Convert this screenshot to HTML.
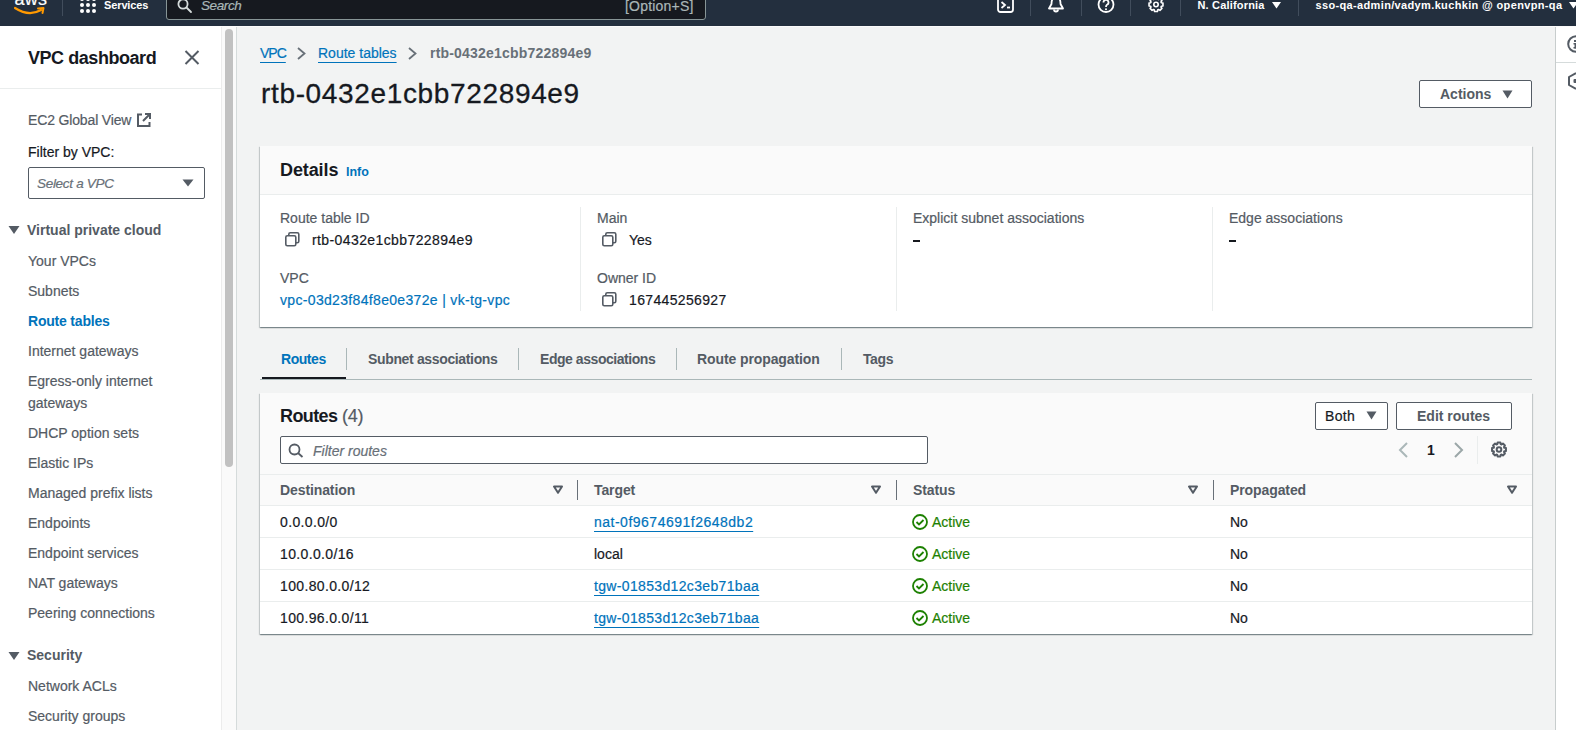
<!DOCTYPE html>
<html><head><meta charset="utf-8"><style>
html,body{margin:0;padding:0;width:1576px;height:730px;overflow:hidden;}
body{font-family:"Liberation Sans",sans-serif;position:relative;background:#f2f3f3;}
.t{position:absolute;white-space:nowrap;-webkit-text-stroke:0.2px currentColor;}
.r{position:absolute;}
u{text-decoration:underline;text-underline-offset:4px;text-decoration-thickness:1.2px;}
</style></head><body>
<div class="r" style="left:0px;top:0px;width:1576px;height:730px;background:#f2f3f3"></div>
<div class="r" style="left:0px;top:0px;width:1576px;height:26px;background:#232f3e"></div>
<div class="r" style="left:0px;top:26px;width:1576px;height:1px;background:#fbfbfb"></div>
<div class="r" style="left:0px;top:26px;width:221px;height:704px;background:#fff"></div>
<div class="r" style="left:221px;top:27px;width:15px;height:703px;background:#fafafa;border-left:1px solid #ececec;box-sizing:border-box"></div>
<div class="r" style="left:225px;top:29px;width:8px;height:438px;background:#c1c1c1;border-radius:4px"></div>
<div class="r" style="left:236px;top:27px;width:1px;height:703px;background:#d5dbdb"></div>
<div class="r" style="left:1555px;top:27px;width:21px;height:703px;background:#fff"></div>
<div class="r" style="left:1555px;top:27px;width:1px;height:703px;background:#c8cdcd"></div>
<svg class="r" style="left:1567px;top:35px" width="12" height="18" viewBox="0 0 12 18"><path d="M9 1.2 A7.8 7.8 0 0 0 9 16.8" stroke="#545b64" stroke-width="2" fill="none"/><rect x="7" y="5" width="3" height="2" fill="#545b64"/><rect x="7.5" y="8" width="2" height="5.5" fill="#545b64"/><rect x="6.5" y="8" width="3" height="1.5" fill="#545b64"/><rect x="6.5" y="12" width="3" height="1.5" fill="#545b64"/></svg>
<svg class="r" style="left:1567px;top:72px" width="12" height="18" viewBox="0 0 12 18"><path d="M9 1 L2 5 V13 L9 17" stroke="#545b64" stroke-width="2" fill="none" stroke-linejoin="round"/><rect x="6.5" y="7" width="3" height="4" rx="1" fill="#545b64"/></svg>
<div class="r" style="left:1556px;top:62px;width:20px;height:1px;background:#d5dbdb"></div>
<div class="t" style="left:14.5px;top:-10.24px;font-size:18px;line-height:18px;color:#fff;letter-spacing:0.3px;">aws</div>
<svg class="r" style="left:14px;top:6px" width="32" height="10" viewBox="0 0 32 10"><path d="M1 2 Q15 11 27 4" stroke="#f90" stroke-width="2.2" fill="none" stroke-linecap="round"/><path d="M24 2.5 L29.5 2 L28.5 7" stroke="#f90" stroke-width="2" fill="none" stroke-linecap="round" stroke-linejoin="round"/></svg>
<div class="r" style="left:62px;top:0px;width:1px;height:16px;background:#414d5c"></div>
<svg class="r" style="left:80px;top:0px" width="16" height="14" viewBox="0 0 16 14"><g fill="#fff"><circle cx="2" cy="-1" r="2"/><circle cx="2" cy="5" r="2"/><circle cx="2" cy="11" r="2"/><circle cx="8" cy="-1" r="2"/><circle cx="8" cy="5" r="2"/><circle cx="8" cy="11" r="2"/><circle cx="14" cy="-1" r="2"/><circle cx="14" cy="5" r="2"/><circle cx="14" cy="11" r="2"/></g></svg>
<div class="t" style="left:104px;top:-0.36px;font-size:11px;line-height:11px;color:#fff;font-weight:700;-webkit-text-stroke:0;letter-spacing:-0.12px;">Services</div>
<div class="r" style="left:166px;top:-4px;width:540px;height:24px;background:#16191f;border:1px solid #879596;border-radius:3px;box-sizing:border-box"></div>
<svg class="r" style="left:177px;top:0px" width="16" height="14" viewBox="0 0 16 14"><circle cx="6" cy="4" r="4.6" stroke="#d5dbdb" stroke-width="1.8" fill="none"/><path d="M9.5 7.5 L14 12" stroke="#d5dbdb" stroke-width="1.8" stroke-linecap="round"/></svg>
<div class="t" style="left:201px;top:-0.93px;font-size:13.5px;line-height:13.5px;color:#aab7b8;font-style:italic;letter-spacing:-0.4px;">Search</div>
<div class="t" style="left:625px;top:-1.35px;font-size:14px;line-height:14px;color:#aab7b8;letter-spacing:0.2px;">[Option+S]</div>
<svg class="r" style="left:997px;top:-4px" width="18" height="17" viewBox="0 0 18 17"><rect x="1" y="1" width="15" height="15" rx="2.5" stroke="#fff" stroke-width="1.8" fill="none"/><path d="M4.5 6 L8 9 L4.5 12" stroke="#fff" stroke-width="1.8" fill="none"/><path d="M10 11.5 H13" stroke="#fff" stroke-width="1.8"/></svg>
<div class="r" style="left:1030px;top:0px;width:1px;height:16px;background:#414d5c"></div>
<svg class="r" style="left:1047px;top:-4px" width="18" height="17" viewBox="0 0 18 17"><path d="M9 1 C5 1 4.5 5 4.5 8 L2 12.5 H16 L13.5 8 C13.5 5 13 1 9 1 Z" stroke="#fff" stroke-width="1.8" fill="none" stroke-linejoin="round"/><path d="M7 13.5 a2 2 0 0 0 4 0" stroke="#fff" stroke-width="1.8" fill="none"/></svg>
<div class="r" style="left:1081px;top:0px;width:1px;height:16px;background:#414d5c"></div>
<svg class="r" style="left:1097px;top:-4px" width="18" height="17" viewBox="0 0 18 17"><circle cx="9" cy="8.5" r="7.5" stroke="#fff" stroke-width="1.8" fill="none"/><path d="M6.5 6.5 a2.5 2.5 0 1 1 3.5 2.2 C9 9.3 9 10 9 11" stroke="#fff" stroke-width="1.8" fill="none"/><circle cx="9" cy="13.2" r="1" fill="#fff"/></svg>
<div class="r" style="left:1130px;top:0px;width:1px;height:16px;background:#414d5c"></div>
<svg class="r" style="left:1147px;top:-4px" width="18" height="17" viewBox="0 0 18 17"><path d="M7.24 3.18 L7.59 1.54 L10.41 1.54 L10.76 3.18 L11.51 3.50 L12.92 2.58 L14.92 4.58 L14.00 5.99 L14.32 6.74 L15.96 7.09 L15.96 9.91 L14.32 10.26 L14.00 11.01 L14.92 12.42 L12.92 14.42 L11.51 13.50 L10.76 13.82 L10.41 15.46 L7.59 15.46 L7.24 13.82 L6.49 13.50 L5.08 14.42 L3.08 12.42 L4.00 11.01 L3.68 10.26 L2.04 9.91 L2.04 7.09 L3.68 6.74 L4.00 5.99 L3.08 4.58 L5.08 2.58 L6.49 3.50 Z" stroke="#fff" stroke-width="1.6" fill="none" stroke-linejoin="round"/><circle cx="9" cy="8.5" r="2.2" stroke="#fff" stroke-width="1.6" fill="none"/></svg>
<div class="r" style="left:1180px;top:0px;width:1px;height:16px;background:#414d5c"></div>
<div class="t" style="left:1197.5px;top:-0.41px;font-size:11px;line-height:11px;color:#fff;font-weight:700;-webkit-text-stroke:0;letter-spacing:0.18px;">N. California</div>
<svg class="r" style="left:1272px;top:2px" width="9" height="7" viewBox="0 0 9 7"><path d="M0 0 H9 L4.5 6.5 Z" fill="#fff"/></svg>
<div class="r" style="left:1298px;top:0px;width:1px;height:16px;background:#414d5c"></div>
<div class="t" style="left:1315.5px;top:-0.41px;font-size:11px;line-height:11px;color:#fff;font-weight:700;-webkit-text-stroke:0;letter-spacing:0.35px;">sso-qa-admin/vadym.kuchkin @ openvpn-qa</div>
<svg class="r" style="left:1569px;top:2px" width="9" height="7" viewBox="0 0 9 7"><path d="M0 0 H9 L4.5 6.5 Z" fill="#fff"/></svg>
<div class="t" style="left:28px;top:48.56px;font-size:18px;line-height:18px;color:#16191f;font-weight:700;-webkit-text-stroke:0;letter-spacing:-0.45px;">VPC dashboard</div>
<svg class="r" style="left:184px;top:50px" width="16" height="15" viewBox="0 0 16 15"><path d="M1.5 1 L14.5 14 M14.5 1 L1.5 14" stroke="#545b64" stroke-width="2"/></svg>
<div class="r" style="left:0px;top:88px;width:221px;height:1px;background:#eaeded"></div>
<div class="t" style="left:28px;top:112.85px;font-size:14px;line-height:14px;color:#545b64;letter-spacing:-0.15px;">EC2 Global View</div>
<svg class="r" style="left:136px;top:112px" width="16" height="16" viewBox="0 0 16 16"><path d="M6 2.5 H2 V14 H13.5 V10" stroke="#545b64" stroke-width="2" fill="none"/><path d="M9 2 H14 V7 M14 2 L7 9" stroke="#545b64" stroke-width="2" fill="none"/></svg>
<div class="t" style="left:28px;top:144.55px;font-size:14px;line-height:14px;color:#16191f;">Filter by VPC:</div>
<div class="r" style="left:28px;top:167px;width:177px;height:32px;background:#fff;border:1px solid #545b64;border-radius:2px;box-sizing:border-box"></div>
<div class="t" style="left:37px;top:176.57px;font-size:13.5px;line-height:13.5px;color:#687078;font-style:italic;letter-spacing:-0.3px;">Select a VPC</div>
<svg class="r" style="left:182px;top:179px" width="12" height="8" viewBox="0 0 12 8"><path d="M0.5 0.5 H11.5 L6 7.5 Z" fill="#545b64"/></svg>
<svg class="r" style="left:8px;top:225px" width="12" height="10" viewBox="0 0 12 10"><path d="M0.5 1 H11.5 L6 9 Z" fill="#545b64"/></svg>
<div class="t" style="left:27px;top:222.75px;font-size:14px;line-height:14px;color:#545b64;font-weight:700;-webkit-text-stroke:0;">Virtual private cloud</div>
<div class="t" style="left:28px;top:253.95px;font-size:14px;line-height:14px;color:#545b64;">Your VPCs</div>
<div class="t" style="left:28px;top:284.15px;font-size:14px;line-height:14px;color:#545b64;">Subnets</div>
<div class="t" style="left:28px;top:313.95px;font-size:14px;line-height:14px;color:#0073bb;font-weight:700;-webkit-text-stroke:0;letter-spacing:-0.2px;">Route tables</div>
<div class="t" style="left:28px;top:343.95px;font-size:14px;line-height:14px;color:#545b64;">Internet gateways</div>
<div class="t" style="left:28px;top:373.95px;font-size:14px;line-height:14px;color:#545b64;">Egress-only internet</div>
<div class="t" style="left:28px;top:395.95px;font-size:14px;line-height:14px;color:#545b64;">gateways</div>
<div class="t" style="left:28px;top:425.95px;font-size:14px;line-height:14px;color:#545b64;">DHCP option sets</div>
<div class="t" style="left:28px;top:455.95px;font-size:14px;line-height:14px;color:#545b64;">Elastic IPs</div>
<div class="t" style="left:28px;top:485.95px;font-size:14px;line-height:14px;color:#545b64;">Managed prefix lists</div>
<div class="t" style="left:28px;top:515.95px;font-size:14px;line-height:14px;color:#545b64;">Endpoints</div>
<div class="t" style="left:28px;top:545.95px;font-size:14px;line-height:14px;color:#545b64;">Endpoint services</div>
<div class="t" style="left:28px;top:575.95px;font-size:14px;line-height:14px;color:#545b64;">NAT gateways</div>
<div class="t" style="left:28px;top:605.95px;font-size:14px;line-height:14px;color:#545b64;">Peering connections</div>
<svg class="r" style="left:8px;top:651px" width="12" height="10" viewBox="0 0 12 10"><path d="M0.5 1 H11.5 L6 9 Z" fill="#545b64"/></svg>
<div class="t" style="left:27px;top:647.75px;font-size:14px;line-height:14px;color:#545b64;font-weight:700;-webkit-text-stroke:0;">Security</div>
<div class="t" style="left:28px;top:678.75px;font-size:14px;line-height:14px;color:#545b64;">Network ACLs</div>
<div class="t" style="left:28px;top:708.75px;font-size:14px;line-height:14px;color:#545b64;">Security groups</div>
<div class="t" style="left:260px;top:45.95px;font-size:14px;line-height:14px;color:#0073bb;letter-spacing:-1px;"><u>VPC</u></div>
<svg class="r" style="left:296px;top:47px" width="11" height="13" viewBox="0 0 11 13"><path d="M2 1 L8.5 6.5 L2 12" stroke="#687078" stroke-width="1.8" fill="none"/></svg>
<div class="t" style="left:318px;top:45.95px;font-size:14px;line-height:14px;color:#0073bb;"><u>Route tables</u></div>
<svg class="r" style="left:407px;top:47px" width="11" height="13" viewBox="0 0 11 13"><path d="M2 1 L8.5 6.5 L2 12" stroke="#687078" stroke-width="1.8" fill="none"/></svg>
<div class="t" style="left:430px;top:45.95px;font-size:14px;line-height:14px;color:#687078;font-weight:700;-webkit-text-stroke:0;letter-spacing:0.2px;">rtb-0432e1cbb722894e9</div>
<div class="t" style="left:261px;top:80.30px;font-size:28px;line-height:28px;color:#16191f;letter-spacing:0.65px;-webkit-text-stroke:0.3px #16191f;">rtb-0432e1cbb722894e9</div>
<div class="r" style="left:1419px;top:80px;width:113px;height:28px;background:#fff;border:1px solid #545b64;border-radius:2px;box-sizing:border-box"></div>
<div class="t" style="left:1440px;top:86.95px;font-size:14px;line-height:14px;color:#545b64;font-weight:700;-webkit-text-stroke:0;">Actions</div>
<svg class="r" style="left:1502px;top:90px" width="11" height="9" viewBox="0 0 11 9"><path d="M0.5 0.5 H10.5 L5.5 8.5 Z" fill="#545b64"/></svg>
<div class="r" style="left:260px;top:146px;width:1272px;height:181px;background:#fff;box-shadow:0 1px 1px 0 rgba(0,28,36,.3),1px 1px 1px 0 rgba(0,28,36,.15),-1px 1px 1px 0 rgba(0,28,36,.15)"></div>
<div class="r" style="left:260px;top:146px;width:1272px;height:48px;background:#fafafa;border-bottom:1px solid #eaeded"></div>
<div class="t" style="left:280px;top:161.26px;font-size:18px;line-height:18px;color:#16191f;font-weight:700;-webkit-text-stroke:0;letter-spacing:-0.1px;">Details</div>
<div class="t" style="left:346px;top:165.92px;font-size:12.5px;line-height:12.5px;color:#0073bb;font-weight:700;-webkit-text-stroke:0;">Info</div>
<div class="r" style="left:580px;top:207px;width:1px;height:104px;background:#eaeded"></div>
<div class="r" style="left:896px;top:207px;width:1px;height:104px;background:#eaeded"></div>
<div class="r" style="left:1212px;top:207px;width:1px;height:104px;background:#eaeded"></div>
<div class="t" style="left:280px;top:211.15px;font-size:14px;line-height:14px;color:#545b64;">Route table ID</div>
<svg class="r" style="left:285px;top:232px" width="15" height="15" viewBox="0 0 15 15"><rect x="3.8" y="0.8" width="10" height="10" rx="1.5" stroke="#545b64" stroke-width="1.6" fill="none"/><rect x="0.8" y="3.8" width="10" height="10" rx="1.5" stroke="#545b64" stroke-width="1.6" fill="#fff"/></svg>
<div class="t" style="left:312px;top:233.45px;font-size:14px;line-height:14px;color:#16191f;letter-spacing:0.4px;">rtb-0432e1cbb722894e9</div>
<div class="t" style="left:280px;top:270.75px;font-size:14px;line-height:14px;color:#545b64;">VPC</div>
<div class="t" style="left:280px;top:292.75px;font-size:14px;line-height:14px;color:#0073bb;letter-spacing:0.33px;">vpc-03d23f84f8e0e372e | vk-tg-vpc</div>
<div class="t" style="left:597px;top:211.15px;font-size:14px;line-height:14px;color:#545b64;">Main</div>
<svg class="r" style="left:602px;top:232px" width="15" height="15" viewBox="0 0 15 15"><rect x="3.8" y="0.8" width="10" height="10" rx="1.5" stroke="#545b64" stroke-width="1.6" fill="none"/><rect x="0.8" y="3.8" width="10" height="10" rx="1.5" stroke="#545b64" stroke-width="1.6" fill="#fff"/></svg>
<div class="t" style="left:629px;top:233.45px;font-size:14px;line-height:14px;color:#16191f;">Yes</div>
<div class="t" style="left:597px;top:270.75px;font-size:14px;line-height:14px;color:#545b64;">Owner ID</div>
<svg class="r" style="left:602px;top:292px" width="15" height="15" viewBox="0 0 15 15"><rect x="3.8" y="0.8" width="10" height="10" rx="1.5" stroke="#545b64" stroke-width="1.6" fill="none"/><rect x="0.8" y="3.8" width="10" height="10" rx="1.5" stroke="#545b64" stroke-width="1.6" fill="#fff"/></svg>
<div class="t" style="left:629px;top:292.95px;font-size:14px;line-height:14px;color:#16191f;letter-spacing:0.35px;">167445256927</div>
<div class="t" style="left:913px;top:211.15px;font-size:14px;line-height:14px;color:#545b64;">Explicit subnet associations</div>
<div class="r" style="left:913px;top:240px;width:7px;height:1.6px;background:#16191f"></div>
<div class="t" style="left:1229px;top:211.15px;font-size:14px;line-height:14px;color:#545b64;">Edge associations</div>
<div class="r" style="left:1229px;top:240px;width:7px;height:1.6px;background:#16191f"></div>
<div class="r" style="left:260px;top:379px;width:1272px;height:1px;background:#aab7b8"></div>
<div class="r" style="left:262px;top:377px;width:84px;height:2px;background:#16191f"></div>
<div class="t" style="left:281px;top:352.35px;font-size:14px;line-height:14px;color:#0073bb;font-weight:700;-webkit-text-stroke:0;letter-spacing:-0.45px;">Routes</div>
<div class="t" style="left:368px;top:352.35px;font-size:14px;line-height:14px;color:#545b64;font-weight:700;-webkit-text-stroke:0;letter-spacing:-0.35px;">Subnet associations</div>
<div class="t" style="left:540px;top:352.35px;font-size:14px;line-height:14px;color:#545b64;font-weight:700;-webkit-text-stroke:0;letter-spacing:-0.45px;">Edge associations</div>
<div class="t" style="left:697px;top:352.35px;font-size:14px;line-height:14px;color:#545b64;font-weight:700;-webkit-text-stroke:0;letter-spacing:-0.1px;">Route propagation</div>
<div class="t" style="left:863px;top:352.35px;font-size:14px;line-height:14px;color:#545b64;font-weight:700;-webkit-text-stroke:0;letter-spacing:-0.4px;">Tags</div>
<div class="r" style="left:346px;top:348px;width:1px;height:22px;background:#aab7b8"></div>
<div class="r" style="left:518px;top:348px;width:1px;height:22px;background:#aab7b8"></div>
<div class="r" style="left:676px;top:348px;width:1px;height:22px;background:#aab7b8"></div>
<div class="r" style="left:841px;top:348px;width:1px;height:22px;background:#aab7b8"></div>
<div class="r" style="left:260px;top:393px;width:1272px;height:241px;background:#fff;box-shadow:0 1px 1px 0 rgba(0,28,36,.3),1px 1px 1px 0 rgba(0,28,36,.15),-1px 1px 1px 0 rgba(0,28,36,.15)"></div>
<div class="r" style="left:260px;top:393px;width:1272px;height:81px;background:#fafafa"></div>
<div class="t" style="left:280px;top:406.76px;font-size:18px;line-height:18px;color:#16191f;font-weight:700;-webkit-text-stroke:0;letter-spacing:-0.6px;">Routes</div>
<div class="t" style="left:342px;top:406.76px;font-size:18px;line-height:18px;color:#545b64;letter-spacing:-0.3px;">(4)</div>
<div class="r" style="left:280px;top:436px;width:648px;height:28px;background:#fff;border:1px solid #545b64;border-radius:2px;box-sizing:border-box"></div>
<svg class="r" style="left:288px;top:443px" width="16" height="15" viewBox="0 0 16 15"><circle cx="6.5" cy="6.5" r="5" stroke="#545b64" stroke-width="1.8" fill="none"/><path d="M10 10 L14.5 14" stroke="#545b64" stroke-width="1.8"/></svg>
<div class="t" style="left:313px;top:443.85px;font-size:14px;line-height:14px;color:#687078;font-style:italic;">Filter routes</div>
<div class="r" style="left:1315px;top:402px;width:73px;height:28px;background:#fff;border:1px solid #545b64;border-radius:2px;box-sizing:border-box"></div>
<div class="t" style="left:1325px;top:409.05px;font-size:14px;line-height:14px;color:#16191f;letter-spacing:0.3px;">Both</div>
<svg class="r" style="left:1366px;top:411px" width="11" height="9" viewBox="0 0 11 9"><path d="M0.5 0.5 H10.5 L5.5 8.5 Z" fill="#545b64"/></svg>
<div class="r" style="left:1396px;top:402px;width:116px;height:28px;background:#fff;border:1px solid #545b64;border-radius:2px;box-sizing:border-box"></div>
<div class="t" style="left:1417px;top:409.05px;font-size:14px;line-height:14px;color:#545b64;font-weight:700;-webkit-text-stroke:0;">Edit routes</div>
<svg class="r" style="left:1397px;top:442px" width="12" height="16" viewBox="0 0 12 16"><path d="M10 1 L3 8 L10 15" stroke="#aab7b8" stroke-width="2" fill="none"/></svg>
<div class="t" style="left:1427px;top:442.95px;font-size:14px;line-height:14px;color:#16191f;font-weight:700;-webkit-text-stroke:0;">1</div>
<svg class="r" style="left:1453px;top:442px" width="12" height="16" viewBox="0 0 12 16"><path d="M2 1 L9 8 L2 15" stroke="#9ba7a8" stroke-width="2" fill="none"/></svg>
<div class="r" style="left:1477px;top:436px;width:1px;height:28px;background:#eaeded"></div>
<svg class="r" style="left:1490px;top:441.3px" width="18" height="17" viewBox="0 0 18 17"><g transform="translate(0 0)"><path d="M7.24 3.18 L7.59 1.54 L10.41 1.54 L10.76 3.18 L11.51 3.50 L12.92 2.58 L14.92 4.58 L14.00 5.99 L14.32 6.74 L15.96 7.09 L15.96 9.91 L14.32 10.26 L14.00 11.01 L14.92 12.42 L12.92 14.42 L11.51 13.50 L10.76 13.82 L10.41 15.46 L7.59 15.46 L7.24 13.82 L6.49 13.50 L5.08 14.42 L3.08 12.42 L4.00 11.01 L3.68 10.26 L2.04 9.91 L2.04 7.09 L3.68 6.74 L4.00 5.99 L3.08 4.58 L5.08 2.58 L6.49 3.50 Z" stroke="#545b64" stroke-width="2" fill="none" stroke-linejoin="round"/><circle cx="9" cy="8.5" r="2.3" stroke="#545b64" stroke-width="2" fill="none"/></g></svg>
<div class="r" style="left:260px;top:474px;width:1272px;height:31px;background:#fafafa"></div>
<div class="r" style="left:260px;top:474px;width:1272px;height:1px;background:#eaeded"></div>
<div class="r" style="left:260px;top:505px;width:1272px;height:1px;background:#eaeded"></div>
<div class="t" style="left:280px;top:483.45px;font-size:14px;line-height:14px;color:#545b64;font-weight:700;-webkit-text-stroke:0;letter-spacing:-0.1px;">Destination</div>
<svg class="r" style="left:552px;top:485px" width="12" height="10" viewBox="0 0 12 10"><path d="M2 1.5 H10 L6 7.8 Z" stroke="#545b64" stroke-width="2" fill="none" stroke-linejoin="round"/></svg>
<div class="r" style="left:577px;top:480px;width:1px;height:20px;background:#687078"></div>
<div class="t" style="left:594px;top:483.45px;font-size:14px;line-height:14px;color:#545b64;font-weight:700;-webkit-text-stroke:0;letter-spacing:-0.1px;">Target</div>
<svg class="r" style="left:870px;top:485px" width="12" height="10" viewBox="0 0 12 10"><path d="M2 1.5 H10 L6 7.8 Z" stroke="#545b64" stroke-width="2" fill="none" stroke-linejoin="round"/></svg>
<div class="r" style="left:896px;top:480px;width:1px;height:20px;background:#687078"></div>
<div class="t" style="left:913px;top:483.45px;font-size:14px;line-height:14px;color:#545b64;font-weight:700;-webkit-text-stroke:0;letter-spacing:-0.1px;">Status</div>
<svg class="r" style="left:1187px;top:485px" width="12" height="10" viewBox="0 0 12 10"><path d="M2 1.5 H10 L6 7.8 Z" stroke="#545b64" stroke-width="2" fill="none" stroke-linejoin="round"/></svg>
<div class="r" style="left:1213px;top:480px;width:1px;height:20px;background:#687078"></div>
<div class="t" style="left:1230px;top:483.45px;font-size:14px;line-height:14px;color:#545b64;font-weight:700;-webkit-text-stroke:0;letter-spacing:-0.1px;">Propagated</div>
<svg class="r" style="left:1506px;top:485px" width="12" height="10" viewBox="0 0 12 10"><path d="M2 1.5 H10 L6 7.8 Z" stroke="#545b64" stroke-width="2" fill="none" stroke-linejoin="round"/></svg>
<div class="t" style="left:280px;top:515.05px;font-size:14px;line-height:14px;color:#16191f;letter-spacing:0.35px;">0.0.0.0/0</div>
<div class="t" style="left:594px;top:515.05px;font-size:14px;line-height:14px;color:#0073bb;letter-spacing:0.5px;"><u>nat-0f9674691f2648db2</u></div>
<svg class="r" style="left:912px;top:514px" width="16" height="16" viewBox="0 0 16 16"><circle cx="8" cy="8" r="7" stroke="#1d8102" stroke-width="1.8" fill="none"/><path d="M4.5 8 L7 10.5 L11.5 6" stroke="#1d8102" stroke-width="1.8" fill="none"/></svg>
<div class="t" style="left:932px;top:515.05px;font-size:14px;line-height:14px;color:#1d8102;">Active</div>
<div class="t" style="left:1230px;top:515.05px;font-size:14px;line-height:14px;color:#16191f;">No</div>
<div class="r" style="left:260px;top:537px;width:1272px;height:1px;background:#eaeded"></div>
<div class="t" style="left:280px;top:547.05px;font-size:14px;line-height:14px;color:#16191f;letter-spacing:0.35px;">10.0.0.0/16</div>
<div class="t" style="left:594px;top:547.05px;font-size:14px;line-height:14px;color:#16191f;">local</div>
<svg class="r" style="left:912px;top:546px" width="16" height="16" viewBox="0 0 16 16"><circle cx="8" cy="8" r="7" stroke="#1d8102" stroke-width="1.8" fill="none"/><path d="M4.5 8 L7 10.5 L11.5 6" stroke="#1d8102" stroke-width="1.8" fill="none"/></svg>
<div class="t" style="left:932px;top:547.05px;font-size:14px;line-height:14px;color:#1d8102;">Active</div>
<div class="t" style="left:1230px;top:547.05px;font-size:14px;line-height:14px;color:#16191f;">No</div>
<div class="r" style="left:260px;top:569px;width:1272px;height:1px;background:#eaeded"></div>
<div class="t" style="left:280px;top:579.05px;font-size:14px;line-height:14px;color:#16191f;letter-spacing:0.35px;">100.80.0.0/12</div>
<div class="t" style="left:594px;top:579.05px;font-size:14px;line-height:14px;color:#0073bb;letter-spacing:0.34px;"><u>tgw-01853d12c3eb71baa</u></div>
<svg class="r" style="left:912px;top:578px" width="16" height="16" viewBox="0 0 16 16"><circle cx="8" cy="8" r="7" stroke="#1d8102" stroke-width="1.8" fill="none"/><path d="M4.5 8 L7 10.5 L11.5 6" stroke="#1d8102" stroke-width="1.8" fill="none"/></svg>
<div class="t" style="left:932px;top:579.05px;font-size:14px;line-height:14px;color:#1d8102;">Active</div>
<div class="t" style="left:1230px;top:579.05px;font-size:14px;line-height:14px;color:#16191f;">No</div>
<div class="r" style="left:260px;top:601px;width:1272px;height:1px;background:#eaeded"></div>
<div class="t" style="left:280px;top:611.05px;font-size:14px;line-height:14px;color:#16191f;letter-spacing:0.35px;">100.96.0.0/11</div>
<div class="t" style="left:594px;top:611.05px;font-size:14px;line-height:14px;color:#0073bb;letter-spacing:0.34px;"><u>tgw-01853d12c3eb71baa</u></div>
<svg class="r" style="left:912px;top:610px" width="16" height="16" viewBox="0 0 16 16"><circle cx="8" cy="8" r="7" stroke="#1d8102" stroke-width="1.8" fill="none"/><path d="M4.5 8 L7 10.5 L11.5 6" stroke="#1d8102" stroke-width="1.8" fill="none"/></svg>
<div class="t" style="left:932px;top:611.05px;font-size:14px;line-height:14px;color:#1d8102;">Active</div>
<div class="t" style="left:1230px;top:611.05px;font-size:14px;line-height:14px;color:#16191f;">No</div>
</body></html>
